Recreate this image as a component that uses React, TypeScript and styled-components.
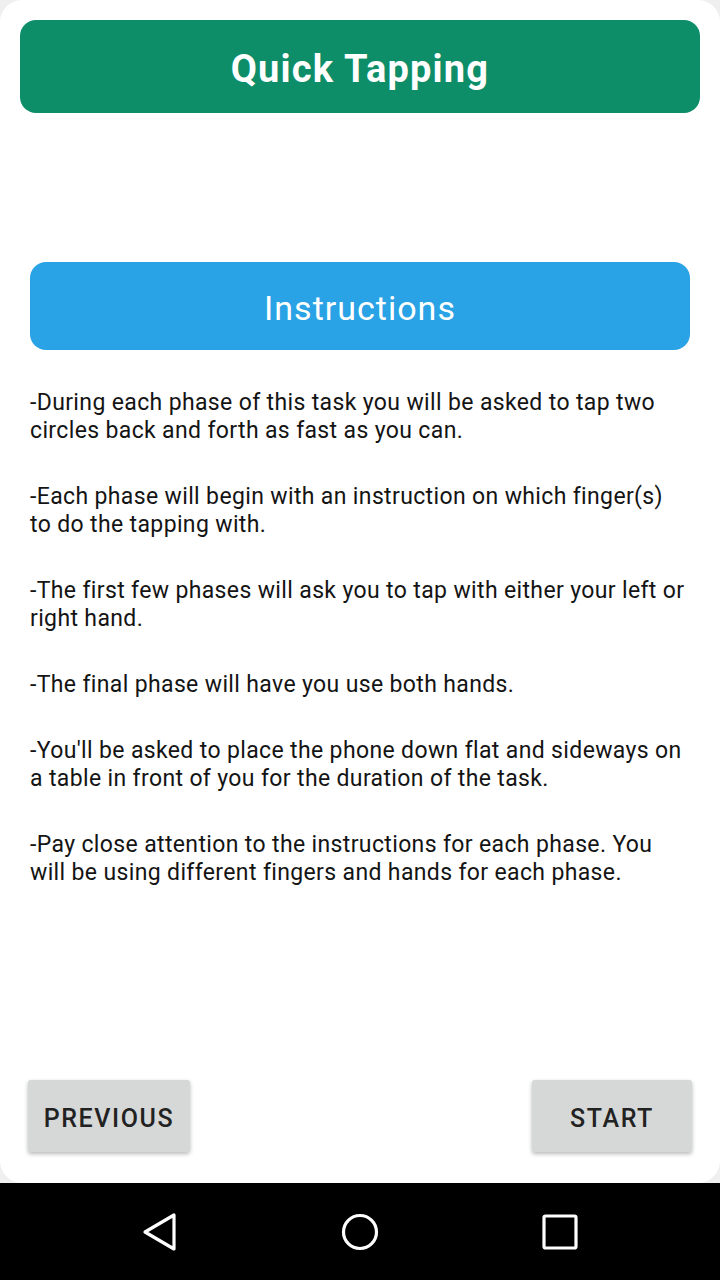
import React from "react";
import styled, { createGlobalStyle } from "styled-components";

const Global = createGlobalStyle`
  html, body { margin: 0; padding: 0; background: #efefef; }
  body { font-family: Roboto, "Noto Sans", sans-serif; }
  #root { width: 720px; height: 1280px; }
`;

const Screen = styled.div`
  width: 720px;
  height: 1280px;
  display: flex;
  flex-direction: column;
  background: #efefef;
`;

const Card = styled.div`
  flex: 1;
  background: #ffffff;
  border-radius: 22px;
  display: flex;
  flex-direction: column;
  padding: 20px 20px 0 20px;
  box-sizing: border-box;
`;

const Header = styled.div`
  height: 93px;
  box-sizing: border-box;
  padding-top: 5px;
  border-radius: 16px;
  background: #0d8e69;
  color: #ffffff;
  display: flex;
  align-items: center;
  justify-content: center;
  font-weight: 700;
  font-size: 38px;
  letter-spacing: 1.2px;
`;

const Content = styled.div`
  padding: 149px 10px 0 10px;
  display: flex;
  flex-direction: column;
`;

const SectionBar = styled.div`
  height: 88px;
  box-sizing: border-box;
  padding-top: 4px;
  border-radius: 16px;
  background: #29a3e6;
  color: #ffffff;
  display: flex;
  align-items: center;
  justify-content: center;
  font-size: 34px;
  font-weight: 400;
  letter-spacing: 1px;
`;

const List = styled.div`
  display: flex;
  flex-direction: column;
  gap: 38px;
  margin-top: 39px;
`;

const Para = styled.p`
  margin: 0;
  font-size: 23px;
  line-height: 28px;
  letter-spacing: 0.36px;
  color: #141414;
`;

const Footer = styled.div`
  margin-top: auto;
  display: flex;
  justify-content: space-between;
  padding: 0 8px 31px 8px;
`;

const Btn = styled.button<{ $w: number }>`
  width: ${(p) => p.$w}px;
  height: 72px;
  border: none;
  border-radius: 3px;
  background: #d6d7d7;
  color: #222222;
  font-family: Roboto, sans-serif;
  font-weight: 500;
  font-size: 25px;
  letter-spacing: 1.6px;
  box-shadow: 0 2px 4px rgba(0, 0, 0, 0.28);
  padding: 4px 0 0 0;
`;

const NavBar = styled.div`
  height: 97px;
  background: #000000;
  display: flex;
  align-items: center;
  justify-content: center;
`;

const NavSlot = styled.div`
  width: 200px;
  display: flex;
  justify-content: center;
`;

export default function App() {
  return (
    <>
      <Global />
      <Screen>
        <Card>
          <Header>Quick Tapping</Header>
          <Content>
            <SectionBar>Instructions</SectionBar>
            <List>
              <Para>
                -During each phase of this task you will be asked to tap two circles back and forth as fast as you can.
              </Para>
              <Para>
                -Each phase will begin with an instruction on which finger(s) to do the tapping with.
              </Para>
              <Para>
                -The first few phases will ask you to tap with either your left or right hand.
              </Para>
              <Para>-The final phase will have you use both hands.</Para>
              <Para>
                -You'll be asked to place the phone down flat and sideways on a table in front of you for the duration of the task.
              </Para>
              <Para>
                -Pay close attention to the instructions for each phase. You will be using different fingers and hands for each phase.
              </Para>
            </List>
          </Content>
          <Footer>
            <Btn $w={162}>PREVIOUS</Btn>
            <Btn $w={160}>START</Btn>
          </Footer>
        </Card>
        <NavBar>
          <NavSlot>
            <svg width="40" height="40" viewBox="0 0 40 40">
              <path d="M34 3 L34 37 L5 20 Z" fill="none" stroke="#fff" strokeWidth="3.2" strokeLinejoin="round" />
            </svg>
          </NavSlot>
          <NavSlot>
            <svg width="40" height="40" viewBox="0 0 40 40">
              <circle cx="20" cy="20" r="16.5" fill="none" stroke="#fff" strokeWidth="3.2" />
            </svg>
          </NavSlot>
          <NavSlot>
            <svg width="40" height="40" viewBox="0 0 40 40">
              <rect x="4" y="4" width="32" height="32" rx="1.5" fill="none" stroke="#fff" strokeWidth="3.2" />
            </svg>
          </NavSlot>
        </NavBar>
      </Screen>
    </>
  );
}
